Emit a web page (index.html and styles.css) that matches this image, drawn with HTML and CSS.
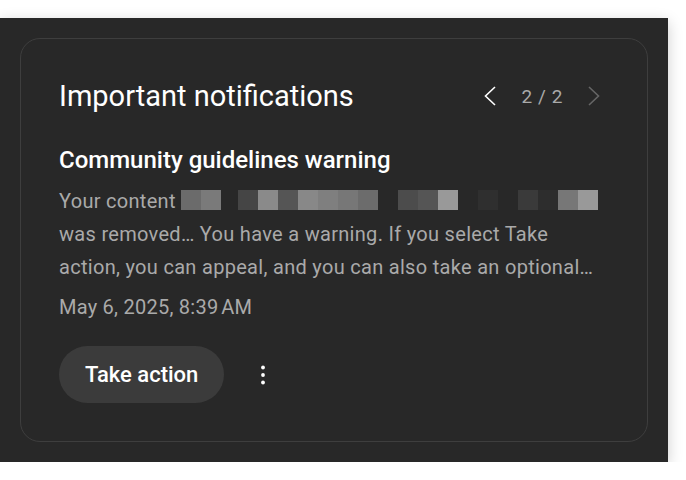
FILE: index.html
```html
<!DOCTYPE html>
<html>
<head>
  <title>Important notifications</title>
  <link rel="stylesheet" href="styles.css">
</head>
<body>
  <div class="panel">
    <div class="card">
      <div class="card-header">
        <h2>Important notifications</h2>
        <div class="pager">
          <button class="pager-btn">
            <svg viewBox="0 0 24 24" width="24" height="24"><path d="M17 3 L7.5 12 L17 21" fill="none" stroke="#fff" stroke-width="1.6"/></svg>
          </button>
          <span class="pager-count">2 / 2</span>
          <button class="pager-btn disabled">
            <svg viewBox="0 0 24 24" width="24" height="24"><path d="M7 3 L16.5 12 L7 21" fill="none" stroke="#666" stroke-width="1.6"/></svg>
          </button>
        </div>
      </div>

      <h3>Community guidelines warning</h3>
      <p class="desc">
        Your content
        <span class="blur">
          <i style="background:#6b6b6b"></i><i style="background:#7a7a7a"></i><b class="narrow"></b><i style="background:#454545"></i><i style="background:#8a8a8a"></i><i style="background:#555"></i><i style="background:#888"></i><i style="background:#7f7f7f"></i><i style="background:#777"></i><i style="background:#6c6c6c"></i><b></b><i style="background:#4c4c4c"></i><i style="background:#555"></i><i style="background:#999"></i><b></b><i style="background:#2f2f2f"></i><b></b><i style="background:#3a3a3a"></i><i style="background:#2d2d2d"></i><i style="background:#777"></i><i style="background:#999"></i>
        </span>
        was removed… You have a warning. If you select Take action, you can appeal, and you can also take an optional…
      </p>
      <p class="date">May 6, 2025, 8:39&#8239;AM</p>

      <div class="actions">
        <button class="action-btn">Take action</button>
        <button class="more-btn">
          <svg viewBox="0 0 24 24" width="24" height="24"><circle cx="12" cy="4.5" r="1.9" fill="#fff"/><circle cx="12" cy="12" r="1.9" fill="#fff"/><circle cx="12" cy="19.5" r="1.9" fill="#fff"/></svg>
        </button>
      </div>
    </div>
  </div>
</body>
</html>
```

FILE: styles.css
```css
body {
  margin: 0;
  padding-top: 18px;
  background: #fff;
  font-family: Roboto, "Noto Sans", Arial, sans-serif;
}

.panel {
  width: 668px;
  height: 444px;
  box-sizing: border-box;
  padding: 20px;
  background: #282828;
  box-shadow: 0 4px 14px rgba(0, 0, 0, 0.2);
}

.card {
  height: 404px;
  box-sizing: border-box;
  border: 1px solid #3e3e3e;
  border-radius: 20px;
  padding: 41px 39px 0 38px;
}

.card-header {
  display: flex;
  align-items: center;
  justify-content: space-between;
  height: 32px;
}

h2 {
  margin: 0;
  font-size: 29px;
  font-weight: 400;
  line-height: 32px;
  color: #fff;
}

.pager {
  display: flex;
  align-items: center;
  gap: 19px;
  margin-right: 2px;
}

.pager-btn {
  width: 24px;
  height: 24px;
  padding: 0;
  border: none;
  background: none;
  display: flex;
}

.pager-count {
  font-size: 19px;
  color: #aaa;
  letter-spacing: 0.6px;
}

h3 {
  margin: 33px 0 0;
  font-size: 24px;
  font-weight: 500;
  line-height: 30px;
  color: #fff;
}

.desc {
  margin: 10px 0 0;
  font-size: 20px;
  line-height: 33px;
  letter-spacing: 0.3px;
  color: #aaa;
}

.blur {
  display: inline-flex;
  vertical-align: -2px;
}

.blur i {
  width: 20px;
  height: 20px;
}

.blur b {
  width: 20px;
  height: 20px;
}

.blur b.narrow {
  width: 17px;
}

.date {
  margin: 9px 0 0;
  font-size: 20px;
  line-height: 28px;
  letter-spacing: 0.25px;
  color: #aaa;
}

.actions {
  display: flex;
  align-items: center;
  gap: 27px;
  margin-top: 25px;
}

.action-btn {
  height: 57px;
  padding: 0 26px;
  border: none;
  border-radius: 29px;
  background: #3b3b3b;
  color: #fff;
  font-family: inherit;
  font-size: 22px;
  font-weight: 500;
}

.more-btn {
  width: 24px;
  height: 24px;
  padding: 0;
  border: none;
  background: none;
  display: flex;
}
```
